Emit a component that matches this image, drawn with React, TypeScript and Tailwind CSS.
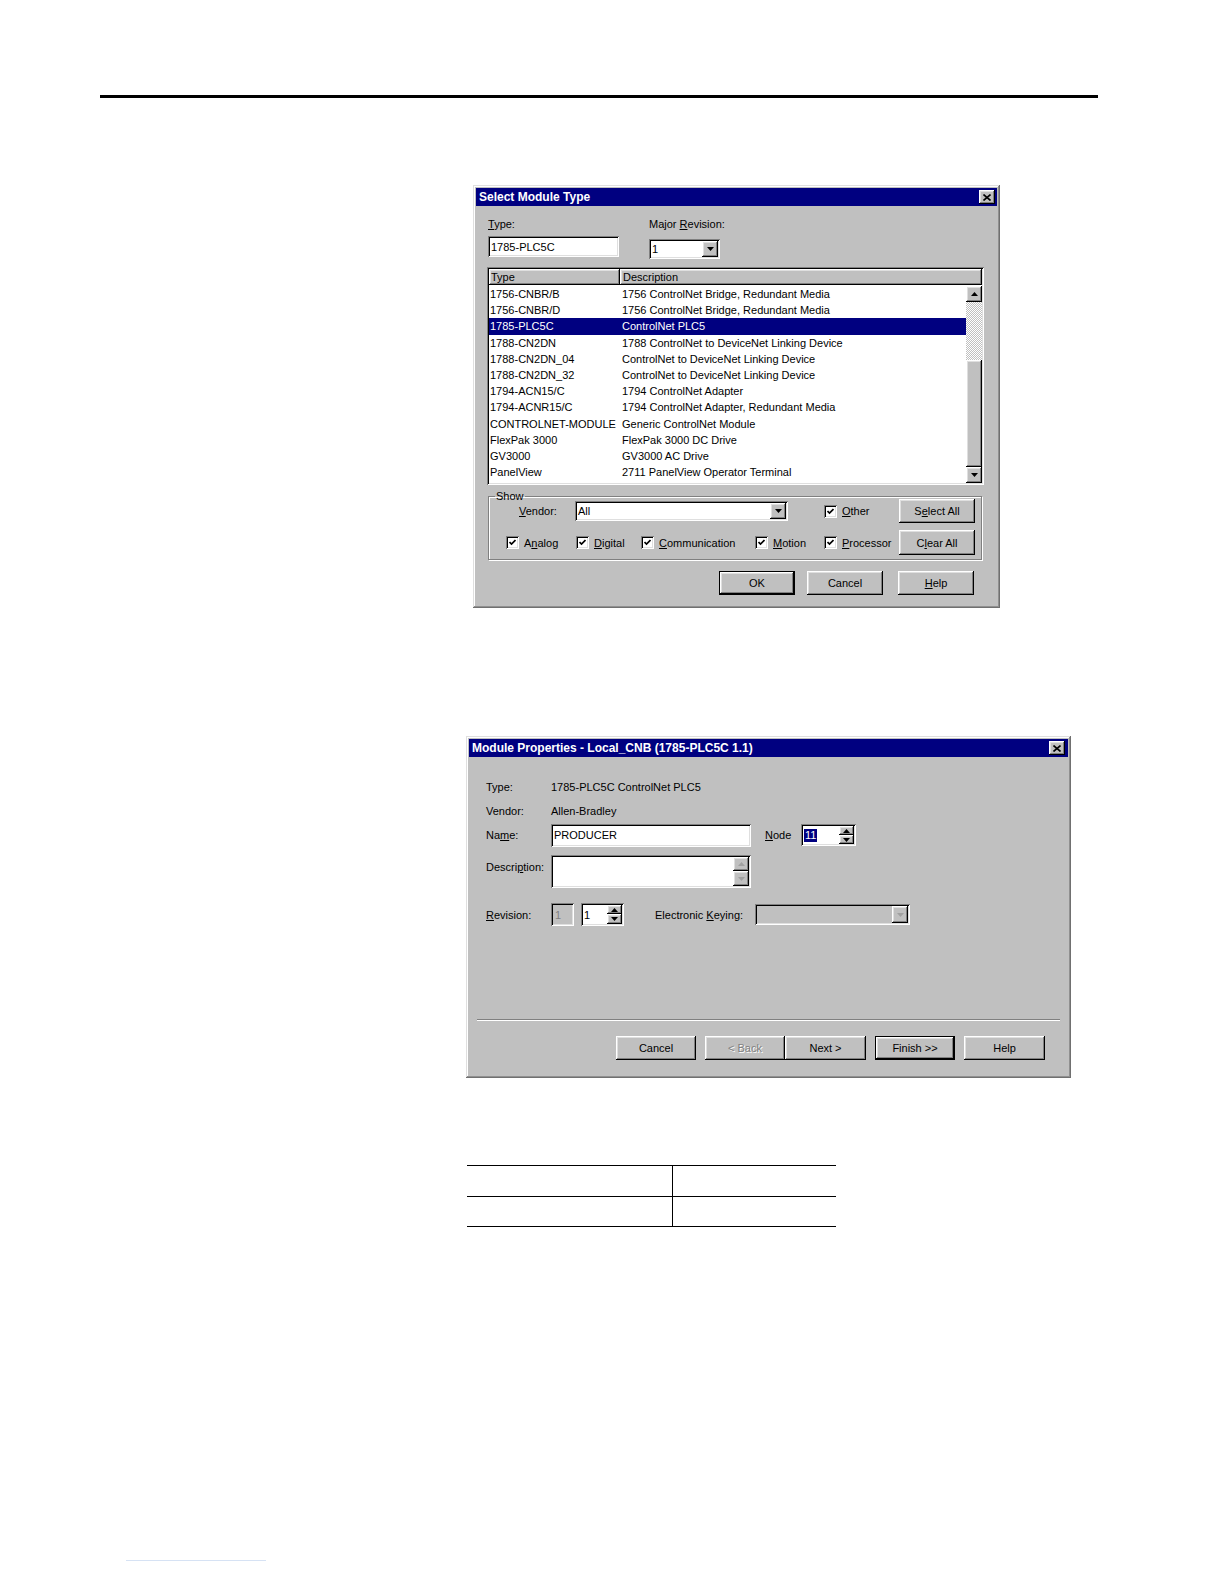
import React from "react";

const raised =
  "bg-[#c0c0c0] shadow-[inset_-1px_-1px_#000000,inset_1px_1px_#ffffff,inset_-2px_-2px_#808080,inset_2px_2px_#dfdfdf]";
const sunken =
  "bg-white shadow-[inset_1px_1px_#808080,inset_-1px_-1px_#ffffff,inset_2px_2px_#000000,inset_-2px_-2px_#dfdfdf]";
const sunkenGray =
  "bg-[#c0c0c0] shadow-[inset_1px_1px_#808080,inset_-1px_-1px_#ffffff,inset_2px_2px_#000000,inset_-2px_-2px_#dfdfdf]";
const frame =
  "bg-[#c0c0c0] shadow-[inset_-1px_-1px_#707070,inset_1px_1px_#dfdfdf,inset_-2px_-2px_#909090,inset_2px_2px_#ffffff]";

function Tri({ up = false, color = "#000000" }: { up?: boolean; color?: string }) {
  return (
    <svg width="7" height="4" viewBox="0 0 7 4" className="block">
      {up ? (
        <polygon points="0,4 7,4 3.5,0" fill={color} />
      ) : (
        <polygon points="0,0 7,0 3.5,4" fill={color} />
      )}
    </svg>
  );
}

function ArrowBtn({
  up = false,
  w = "w-[16px]",
  h = "h-[16px]",
  color = "#000000",
}: {
  up?: boolean;
  w?: string;
  h?: string;
  color?: string;
}) {
  return (
    <div className={`${raised} ${w} ${h} flex items-center justify-center shrink-0`}>
      <Tri up={up} color={color} />
    </div>
  );
}

function CloseBtn() {
  return (
    <div className={`${raised} w-[16px] h-[14px] flex items-center justify-center`}>
      <svg width="8" height="7" viewBox="0 0 8 7">
        <path d="M0.5 0.5L7.5 6.5M7.5 0.5L0.5 6.5" stroke="#000" strokeWidth="1.6" />
      </svg>
    </div>
  );
}

function Button({
  children,
  w = "w-[76px]",
  h = "h-[24px]",
  def = false,
  disabled = false,
}: {
  children: React.ReactNode;
  w?: string;
  h?: string;
  def?: boolean;
  disabled?: boolean;
}) {
  return (
    <div className={`${w} ${h} shrink-0 ${def ? "border border-black" : ""}`}>
      <div
        className={`${raised} w-full h-full flex items-center justify-center ${
          disabled ? "text-[#808080] [text-shadow:1px_1px_#ffffff]" : "text-black"
        }`}
      >
        {children}
      </div>
    </div>
  );
}

function Check({ children, w }: { children: React.ReactNode; w: string }) {
  return (
    <div className={`${w} flex items-center gap-[5px] shrink-0`}>
      <div className={`${sunken} w-[13px] h-[13px] flex items-center justify-center`}>
        <svg width="7" height="7" viewBox="0 0 7 7">
          <path d="M0.5 3L2.5 5L6.5 1" stroke="#000" strokeWidth="1.7" fill="none" />
        </svg>
      </div>
      <span>{children}</span>
    </div>
  );
}

const rows: [string, string][] = [
  ["1756-CNBR/B", "1756 ControlNet Bridge, Redundant Media"],
  ["1756-CNBR/D", "1756 ControlNet Bridge, Redundant Media"],
  ["1785-PLC5C", "ControlNet PLC5"],
  ["1788-CN2DN", "1788 ControlNet to DeviceNet Linking Device"],
  ["1788-CN2DN_04", "ControlNet to DeviceNet Linking Device"],
  ["1788-CN2DN_32", "ControlNet to DeviceNet Linking Device"],
  ["1794-ACN15/C", "1794 ControlNet Adapter"],
  ["1794-ACNR15/C", "1794 ControlNet Adapter, Redundant Media"],
  ["CONTROLNET-MODULE", "Generic ControlNet Module"],
  ["FlexPak 3000", "FlexPak 3000 DC Drive"],
  ["GV3000", "GV3000 AC Drive"],
  ["PanelView", "2711 PanelView Operator Terminal"],
];

function SelectModuleType() {
  return (
    <div className={`${frame} ml-[473px] mt-[87px] w-[527px] h-[423px] p-[3px]`}>
      <div className="h-[18px] bg-[#000080] flex items-center justify-between pl-[3px] pr-[2px]">
        <span className="text-white font-bold text-[12px] leading-none">Select Module Type</span>
        <CloseBtn />
      </div>
      <div className="pl-[12px]">
        {/* labels */}
        <div className="flex mt-[11px] h-[14px] items-center">
          <span className="w-[161px]">
            <u>T</u>ype:
          </span>
          <span>
            Major <u>R</u>evision:
          </span>
        </div>
        {/* inputs */}
        <div className="flex mt-[5px] h-[23px] items-start">
          <div className={`${sunken} w-[131px] h-[21px] flex items-center pl-[3px]`}>1785-PLC5C</div>
          <div className={`${sunken} ml-[30px] mt-[3px] w-[71px] h-[20px] flex items-center pl-[3px] pr-[2px] justify-between`}>
            <span>1</span>
            <ArrowBtn />
          </div>
        </div>
        {/* list */}
        <div className={`${sunken} mt-[8px] -ml-[1px] w-[497px] h-[218px] p-[2px] flex flex-col`}>
          <div className="flex h-[16px] shrink-0">
            <div className={`${raised} w-[131px] h-full flex items-center pl-[2px]`}>Type</div>
            <div className={`${raised} flex-1 h-full flex items-center pl-[3px]`}>Description</div>
          </div>
          <div className="flex flex-1">
            <div className="flex-1 pt-[1px]">
              {rows.map(([t, d], i) => (
                <div
                  key={t}
                  className={`flex h-[16.2px] items-center ${
                    i === 2 ? "bg-[#000080] text-white" : "text-black"
                  }`}
                >
                  <span className="w-[133px] pl-[1px] whitespace-nowrap">{t}</span>
                  <span className="whitespace-nowrap">{d}</span>
                </div>
              ))}
            </div>
            <div className="w-[16px] flex flex-col pt-[1px]">
              <ArrowBtn up />
              <div className="h-[58px] bg-[repeating-conic-gradient(#c0c0c0_0%_25%,#ffffff_0%_50%)] bg-[length:2px_2px]" />
              <div className={`${raised} flex-1`} />
              <ArrowBtn />
            </div>
          </div>
        </div>
        {/* show group */}
        <fieldset className="mt-[5px] w-[494px] h-[70px] border border-[#808080] shadow-[1px_1px_#ffffff,inset_1px_1px_#ffffff] px-0 pb-0">
          <legend className="ml-[6px] px-[1px] leading-[12px]">Show</legend>
          <div className="flex items-center h-[24px] mt-[-3px]">
            <span className="w-[30px]" />
            <span className="w-[56px]">
              <u>V</u>endor:
            </span>
            <div className={`${sunken} w-[213px] h-[20px] flex items-center justify-between pl-[3px] pr-[2px]`}>
              <span>All</span>
              <ArrowBtn />
            </div>
            <span className="w-[36px]" />
            <Check w="w-[75px]">
              <u>O</u>ther
            </Check>
            <Button>
              S<u>e</u>lect All
            </Button>
          </div>
          <div className="flex items-center h-[25px] mt-[7px]">
            <span className="w-[17px]" />
            <Check w="w-[70px]">
              A<u>n</u>alog
            </Check>
            <Check w="w-[65px]">
              <u>D</u>igital
            </Check>
            <Check w="w-[114px]">
              <u>C</u>ommunication
            </Check>
            <Check w="w-[69px]">
              <u>M</u>otion
            </Check>
            <Check w="w-[75px]">
              <u>P</u>rocessor
            </Check>
            <Button h="h-[25px]">
              C<u>l</u>ear All
            </Button>
          </div>
        </fieldset>
        {/* buttons */}
        <div className="flex mt-[11px] ml-[231px] gap-[12px]">
          <Button def>OK</Button>
          <Button>Cancel</Button>
          <div className="ml-[3px]">
            <Button>
              <u>H</u>elp
            </Button>
          </div>
        </div>
      </div>
    </div>
  );
}

function ModuleProperties() {
  return (
    <div className={`${frame} ml-[466px] mt-[128px] w-[605px] h-[342px] p-[3px]`}>
      <div className="h-[18px] bg-[#000080] flex items-center justify-between pl-[3px] pr-[3px]">
        <span className="text-white font-bold text-[12px] leading-none">
          Module Properties - Local_CNB (1785-PLC5C 1.1)
        </span>
        <CloseBtn />
      </div>
      <div className="pl-[17px]">
        <div className="flex items-center h-[14px] mt-[23px]">
          <span className="w-[65px]">Type:</span>
          <span>1785-PLC5C ControlNet PLC5</span>
        </div>
        <div className="flex items-center h-[14px] mt-[10px]">
          <span className="w-[65px]">Vendor:</span>
          <span>Allen-Bradley</span>
        </div>
        <div className="flex items-center h-[24px] mt-[5px]">
          <span className="w-[65px]">
            Na<u>m</u>e:
          </span>
          <div className={`${sunken} w-[200px] h-[23px] flex items-center pl-[3px]`}>PRODUCER</div>
          <span className="ml-[14px] w-[36px]">
            <u>N</u>ode
          </span>
          <div className={`${sunken} w-[55px] h-[22px] flex items-center justify-between pl-[3px] pr-[2px]`}>
            <span className="bg-[#000080] text-white leading-[13px] px-[1px]">11</span>
            <div className="flex flex-col">
              <ArrowBtn up w="w-[15px]" h="h-[9px]" />
              <ArrowBtn w="w-[15px]" h="h-[9px]" />
            </div>
          </div>
        </div>
        <div className="flex items-start h-[33px] mt-[8px]">
          <span className="w-[65px] mt-[5px]">
            Descri<u>p</u>tion:
          </span>
          <div className={`${sunken} w-[200px] h-[33px] flex justify-end p-[2px]`}>
            <div className="flex flex-col">
              <ArrowBtn up w="w-[16px]" h="h-[14px]" color="#a0a0a0" />
              <ArrowBtn w="w-[16px]" h="h-[15px]" color="#a0a0a0" />
            </div>
          </div>
        </div>
        <div className="flex items-center h-[23px] mt-[15px]">
          <span className="w-[65px]">
            <u>R</u>evision:
          </span>
          <div className={`${sunkenGray} w-[23px] h-[23px] flex items-center pl-[4px] text-[#808080]`}>1</div>
          <div className={`${sunken} ml-[7px] w-[43px] h-[23px] flex items-center justify-between pl-[3px] pr-[2px]`}>
            <span>1</span>
            <div className="flex flex-col">
              <ArrowBtn up w="w-[15px]" h="h-[9px]" />
              <ArrowBtn w="w-[15px]" h="h-[10px]" />
            </div>
          </div>
          <span className="ml-[31px] w-[100px]">
            Electronic <u>K</u>eying:
          </span>
          <div className={`${sunkenGray} w-[155px] h-[21px] flex items-center justify-end pr-[2px]`}>
            <ArrowBtn w="w-[16px]" h="h-[17px]" color="#a0a0a0" />
          </div>
        </div>
      </div>
      <div className="mx-[8px] mt-[93px] h-[2px] border-t border-[#808080] border-b border-b-white" />
      <div className="flex mt-[15px] ml-[147px]">
        <Button w="w-[80px]">Cancel</Button>
        <div className="ml-[9px]">
          <Button w="w-[80px]" disabled>
            &lt; Back
          </Button>
        </div>
        <Button w="w-[81px]">Next &gt;</Button>
        <div className="ml-[9px]">
          <Button w="w-[80px]" def>
            Finish &gt;&gt;
          </Button>
        </div>
        <div className="ml-[9px]">
          <Button w="w-[81px]">Help</Button>
        </div>
      </div>
    </div>
  );
}

function RuleTable() {
  return (
    <div className="ml-[467px] mt-[87px] w-[369px]">
      <div className="flex h-[31px] border-t border-black">
        <div className="w-[206px] border-r border-black" />
        <div className="flex-1" />
      </div>
      <div className="flex h-[31px] border-t border-b border-black">
        <div className="w-[206px] border-r border-black" />
        <div className="flex-1" />
      </div>
    </div>
  );
}

export default function App() {
  return (
    <div className="w-[1224px] h-[1584px] bg-white overflow-hidden text-[11px] leading-[14px] text-black font-['Liberation_Sans',Arial,sans-serif]">
      <div className="pt-[95px]">
        <div className="ml-[100px] w-[998px] h-[3px] bg-black" />
      </div>
      <SelectModuleType />
      <ModuleProperties />
      <RuleTable />
      <div className="ml-[126px] mt-[333px] w-[140px] h-[1px] bg-[#d6e2f4]" />
    </div>
  );
}
